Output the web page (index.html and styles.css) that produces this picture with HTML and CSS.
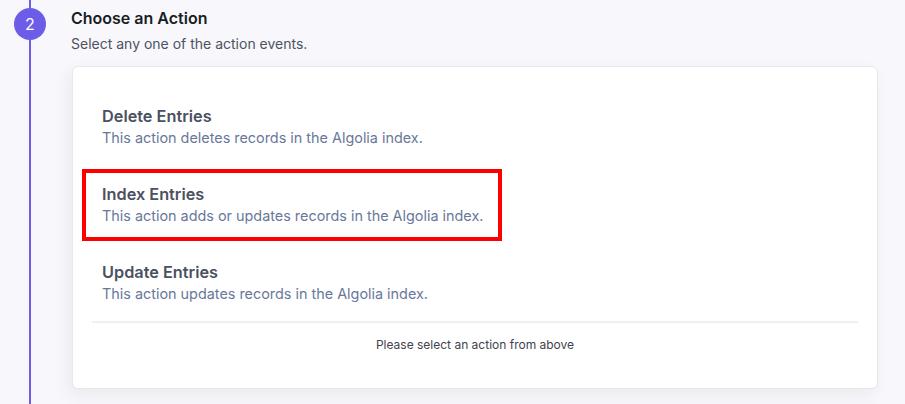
FILE: index.html
```html
<!DOCTYPE html>
<html>
<head>
<meta charset="utf-8">
<link rel="stylesheet" href="styles.css">
</head>
<body>
<div class="step">
  <div class="rail">
    <div class="line"></div>
    <div class="num">2</div>
  </div>
  <div class="content">
    <h2 class="title">Choose an Action</h2>
    <p class="sub">Select any one of the action events.</p>
    <div class="card">
      <div class="item">
        <div class="item-title">Delete Entries</div>
        <div class="item-desc">This action deletes records in the Algolia index.</div>
      </div>
      <div class="item selected">
        <div class="item-title">Index Entries</div>
        <div class="item-desc">This action adds or updates records in the Algolia index.</div>
      </div>
      <div class="item">
        <div class="item-title">Update Entries</div>
        <div class="item-desc">This action updates records in the Algolia index.</div>
      </div>
      <div class="divider"></div>
      <div class="hint">Please select an action from above</div>
    </div>
  </div>
</div>
</body>
</html>
```

FILE: styles.css
```css
html, body {
  margin: 0;
  padding: 0;
}
body {
  background: #f8f8fc;
  font-family: Inter, "Noto Sans", sans-serif;
  width: 905px;
  height: 404px;
  overflow: hidden;
}
.step {
  display: flex;
  height: 404px;
}
.rail {
  position: relative;
  width: 60px;
  flex: none;
}
.line {
  position: absolute;
  left: 29px;
  top: 0;
  bottom: 0;
  width: 2px;
  background: #6c5ce7;
}
.num {
  position: absolute;
  left: 14px;
  top: 8px;
  width: 32px;
  height: 32px;
  border-radius: 50%;
  background: #6c5ce7;
  color: #fff;
  font-size: 16px;
  line-height: 32px;
  text-align: center;
}
.content {
  padding-left: 11px;
  width: 807px;
}
.title {
  margin: 7px 0 0;
  font-size: 16px;
  font-weight: 600;
  line-height: 22px;
  color: #1a1d24;
}
.sub {
  margin: 4px 0 0;
  font-size: 14px;
  line-height: 22px;
  color: #4d5260;
}
.card {
  margin-top: 11px;
  margin-left: 1px;
  background: #fff;
  border: 1px solid #e6e8ee;
  border-radius: 6px;
  box-shadow: -4px 6px 16px rgba(30, 35, 60, 0.07);
  padding: 24px 19px 35px 19px;
}
.item {
  box-sizing: border-box;
  width: 420px;
  margin-left: -10px;
  padding: 10px 14px 11px 16px;
  border: 4px solid transparent;
}
.item + .item {
  margin-top: 6px;
}
.item.selected {
  border-color: #ff0000;
}
.item-title {
  font-size: 16.3px;
  font-weight: 600;
  line-height: 22px;
  color: #4b5160;
}
.item-desc {
  font-size: 14.4px;
  line-height: 21px;
  color: #69789a;
  white-space: nowrap;
}
.divider {
  margin-top: 2px;
  height: 2px;
  background: #edf0f5;
}
.hint {
  margin-top: 13px;
  text-align: center;
  font-size: 12px;
  line-height: 17px;
  color: #3f434d;
}
```
